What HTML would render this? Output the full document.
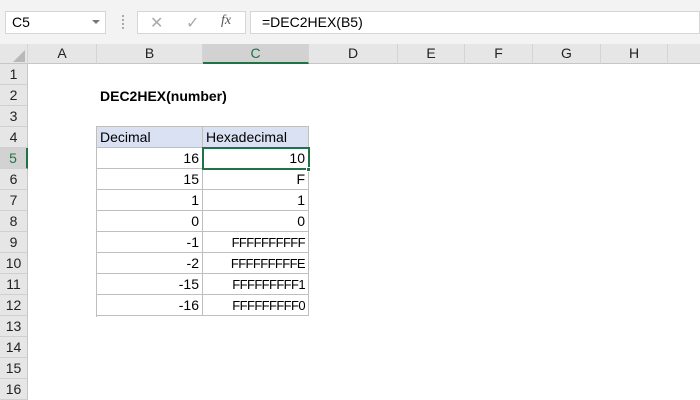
<!DOCTYPE html><html><head><style>
body{margin:0;width:700px;height:400px;overflow:hidden;background:#fff;font-family:"Liberation Sans",sans-serif;position:relative}
.a{position:absolute;box-sizing:border-box}
.tb{left:0;top:0;width:700px;height:44px;background:#f3f3f3}
.ch{top:44px;height:20px;background:#e6e6e6;border-right:1px solid #d4d4d4;border-bottom:1px solid #c6c6c6;font-size:14px;color:#222;text-align:center;line-height:19px}
.rh{left:0;width:28px;height:21px;background:#e6e6e6;border-bottom:1px solid #d0d0d0;border-right:1px solid #c6c6c6;font-size:14px;color:#222;text-align:center;line-height:21px}
.c{height:21px;font-size:14px;line-height:21px;padding:0 3px;border-right:1px solid #bfbfbf;border-bottom:1px solid #bfbfbf;text-align:right;color:#000}
.f{font-size:13px;letter-spacing:-0.6px;padding-right:3px}
</style></head><body>
<div class="a tb"></div>
<div class="a" style="left:5px;top:11px;width:101px;height:23px;background:#fff;border:1px solid #d6d6d6;font-size:14px;line-height:21px;padding-left:6px">C5</div>
<div class="a" style="left:92px;top:20px;width:0;height:0;border-left:4px solid transparent;border-right:4px solid transparent;border-top:4px solid #777"></div>
<div class="a" style="left:122px;top:15px;width:2px;height:14px;border-left:2px dotted #aaa"></div>
<div class="a" style="left:137px;top:11px;width:109px;height:23px;background:#fff;border:1px solid #d6d6d6"></div>
<div class="a" style="left:150px;top:13px;font-size:16px;color:#aaa">✕</div>
<div class="a" style="left:186px;top:13px;font-size:16px;color:#aaa">✓</div>
<div class="a" style="left:221px;top:13px;font-size:14px;color:#555;font-style:italic;font-family:'Liberation Serif',serif">fx</div>
<div class="a" style="left:250px;top:11px;width:450px;height:23px;background:#fff;border:1px solid #d6d6d6;font-size:14px;line-height:21px;padding-left:11px">=DEC2HEX(B5)</div>
<div class="a ch" style="left:0;width:28px"></div>
<div class="a" style="left:13px;top:50px;width:0;height:0;border-left:12px solid transparent;border-bottom:12px solid #b8b8b8"></div>
<div class="a ch" style="left:28px;width:69px">A</div>
<div class="a ch" style="left:97px;width:106px">B</div>
<div class="a ch" style="left:203px;width:106px;background:#d2d2d2;border-bottom:2px solid #217346;color:#217346">C</div>
<div class="a ch" style="left:309px;width:89px">D</div>
<div class="a ch" style="left:398px;width:67px">E</div>
<div class="a ch" style="left:465px;width:68px">F</div>
<div class="a ch" style="left:533px;width:68px">G</div>
<div class="a ch" style="left:601px;width:67px">H</div>
<div class="a ch" style="left:668px;width:40px"></div>
<div class="a rh" style="top:64px">1</div><div class="a rh" style="top:85px">2</div><div class="a rh" style="top:106px">3</div><div class="a rh" style="top:127px">4</div>
<div class="a rh" style="top:148px;background:#d2d2d2;color:#217346;border-right:2px solid #217346">5</div>
<div class="a rh" style="top:169px">6</div><div class="a rh" style="top:190px">7</div><div class="a rh" style="top:211px">8</div><div class="a rh" style="top:232px">9</div><div class="a rh" style="top:253px">10</div><div class="a rh" style="top:274px">11</div><div class="a rh" style="top:295px">12</div><div class="a rh" style="top:316px">13</div><div class="a rh" style="top:337px">14</div><div class="a rh" style="top:358px">15</div><div class="a rh" style="top:379px">16</div>
<div class="a" style="left:100px;top:86px;font-size:14px;font-weight:bold;line-height:21px">DEC2HEX(number)</div>
<div class="a" style="left:96px;top:126px;width:1px;height:191px;background:#bfbfbf"></div>
<div class="a" style="left:97px;top:126px;width:212px;height:1px;background:#bfbfbf"></div>
<div class="a c" style="left:97px;top:127px;width:106px;background:#d9e1f2;text-align:left">Decimal</div>
<div class="a c" style="left:203px;top:127px;width:106px;background:#d9e1f2;text-align:left">Hexadecimal</div>
<div class="a c" style="left:97px;top:148px;width:106px">16</div><div class="a c" style="left:203px;top:148px;width:106px">10</div>
<div class="a c" style="left:97px;top:169px;width:106px">15</div><div class="a c" style="left:203px;top:169px;width:106px">F</div>
<div class="a c" style="left:97px;top:190px;width:106px">1</div><div class="a c" style="left:203px;top:190px;width:106px">1</div>
<div class="a c" style="left:97px;top:211px;width:106px">0</div><div class="a c" style="left:203px;top:211px;width:106px">0</div>
<div class="a c" style="left:97px;top:232px;width:106px">-1</div><div class="a c f" style="left:203px;top:232px;width:106px">FFFFFFFFFF</div>
<div class="a c" style="left:97px;top:253px;width:106px">-2</div><div class="a c f" style="left:203px;top:253px;width:106px">FFFFFFFFFE</div>
<div class="a c" style="left:97px;top:274px;width:106px">-15</div><div class="a c f" style="left:203px;top:274px;width:106px">FFFFFFFFF1</div>
<div class="a c" style="left:97px;top:295px;width:106px">-16</div><div class="a c f" style="left:203px;top:295px;width:106px">FFFFFFFFF0</div>
<div class="a" style="left:202px;top:147px;width:108px;height:23px;border:2px solid #217346"></div>
<div class="a" style="left:306px;top:167px;width:5px;height:5px;background:#217346;border:1px solid #fff"></div>
</body></html>
